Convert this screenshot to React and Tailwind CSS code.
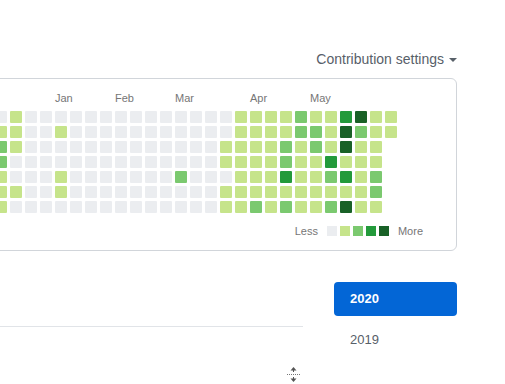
import React from "react";

const LEVEL = [
  "bg-[#ebedf0]",
  "bg-[#c6e48b]",
  "bg-[#7bc96f]",
  "bg-[#239a3b]",
  "bg-[#196127]",
];

const Z = [0, 0, 0, 0, 0, 0, 0];

const COLS = [
  [0, 1, 2, 2, 1, 1, 1],
  [1, 1, 1, 0, 0, 1, 0],
  Z,
  Z,
  [0, 1, 0, 0, 1, 1, 0],
  Z,
  Z,
  Z,
  Z,
  Z,
  Z,
  Z,
  [0, 0, 0, 0, 2, 0, 0],
  Z,
  Z,
  [0, 0, 1, 1, 0, 1, 1],
  [1, 1, 1, 1, 1, 1, 1],
  [1, 1, 1, 1, 1, 1, 2],
  [1, 1, 1, 1, 1, 1, 1],
  [1, 1, 2, 2, 3, 1, 2],
  [2, 2, 1, 1, 1, 1, 1],
  [1, 2, 2, 1, 1, 1, 1],
  [1, 1, 1, 3, 2, 1, 2],
  [3, 4, 4, 1, 3, 1, 4],
  [4, 2, 1, 1, 1, 1, 1],
  [1, 1, 1, 1, 2, 2, 1],
  [1, 1],
];

const font = { fontFamily: '"Liberation Sans", Arial, sans-serif' };

function Cursor() {
  return (
    <svg
      className="absolute left-[286px] top-[366px]"
      width="15"
      height="17"
      viewBox="0 0 15 17"
    >
      <polygon points="7.5,1 4.5,4.5 10.5,4.5" fill="#555" />
      <rect x="7" y="4" width="1" height="2" fill="#555" />
      <line
        x1="1"
        y1="8.5"
        x2="14"
        y2="8.5"
        stroke="#777"
        strokeWidth="1"
        strokeDasharray="1 1"
      />
      <rect x="7" y="11" width="1" height="2" fill="#555" />
      <polygon points="7.5,16 4.5,12.5 10.5,12.5" fill="#555" />
    </svg>
  );
}

export default function App() {
  return (
    <div
      className="relative w-[505px] h-[384px] overflow-hidden bg-white"
      style={font}
    >
      <div className="ml-[-20px] w-[477px]">
        {/* header */}
        <div className="pt-[49px] mb-[9px] flex justify-end items-center h-[69px]">
          <span className="text-[14px] leading-[20px] text-[#586069]">
            Contribution settings
          </span>
          <span className="ml-[5px] mt-[1px] w-0 h-0 border-x-[4px] border-x-transparent border-t-[4px] border-t-[#586069]" />
        </div>

        {/* graph box */}
        <div className="border border-[#d1d5da] rounded-[6px] pl-[14px] pt-[12px] pb-[12px]">
          <div className="grid grid-cols-[repeat(27,12px)] gap-x-[3px] h-[14px] mb-[6px] text-[11px] leading-[14px] text-[#767676]">
            <span className="col-start-5 col-span-4 whitespace-nowrap">Jan</span>
            <span className="col-start-9 col-span-4 whitespace-nowrap">Feb</span>
            <span className="col-start-13 col-span-4 whitespace-nowrap">Mar</span>
            <span className="col-start-18 col-span-4 whitespace-nowrap">Apr</span>
            <span className="col-start-22 col-span-4 whitespace-nowrap">May</span>
          </div>

          <div className="flex gap-[3px]">
            {COLS.map((col, i) => (
              <div key={i} className="flex flex-col gap-[3px]">
                {col.map((lv, j) => (
                  <div
                    key={j}
                    className={`w-[12px] h-[12px] rounded-[1px] ${LEVEL[lv]}`}
                  />
                ))}
              </div>
            ))}
          </div>

          <div className="mt-[11px] h-[14px] flex justify-end items-center pr-[33px] text-[11px] leading-[14px] text-[#767676]">
            <span>Less</span>
            <div className="ml-[9px] flex gap-[3px]">
              {LEVEL.map((c, i) => (
                <div key={i} className={`w-[10px] h-[10px] ${c}`} />
              ))}
            </div>
            <span className="ml-[9px]">More</span>
          </div>
        </div>

        {/* lower section */}
        <div className="flex gap-[31px]">
          <div className="flex-1">
            <div className="h-[76px] border-b border-[#e1e4e8]" />
          </div>
          <div className="w-[123px] pt-[31px] flex flex-col">
            <div className="h-[34px] rounded-[4px] bg-[#0366d6] text-white font-bold text-[13px] flex items-center pl-[16px]">
              2020
            </div>
            <div className="mt-[7px] h-[34px] text-[13px] text-[#586069] flex items-center pl-[16px]">
              2019
            </div>
          </div>
        </div>
      </div>
      <Cursor />
    </div>
  );
}
